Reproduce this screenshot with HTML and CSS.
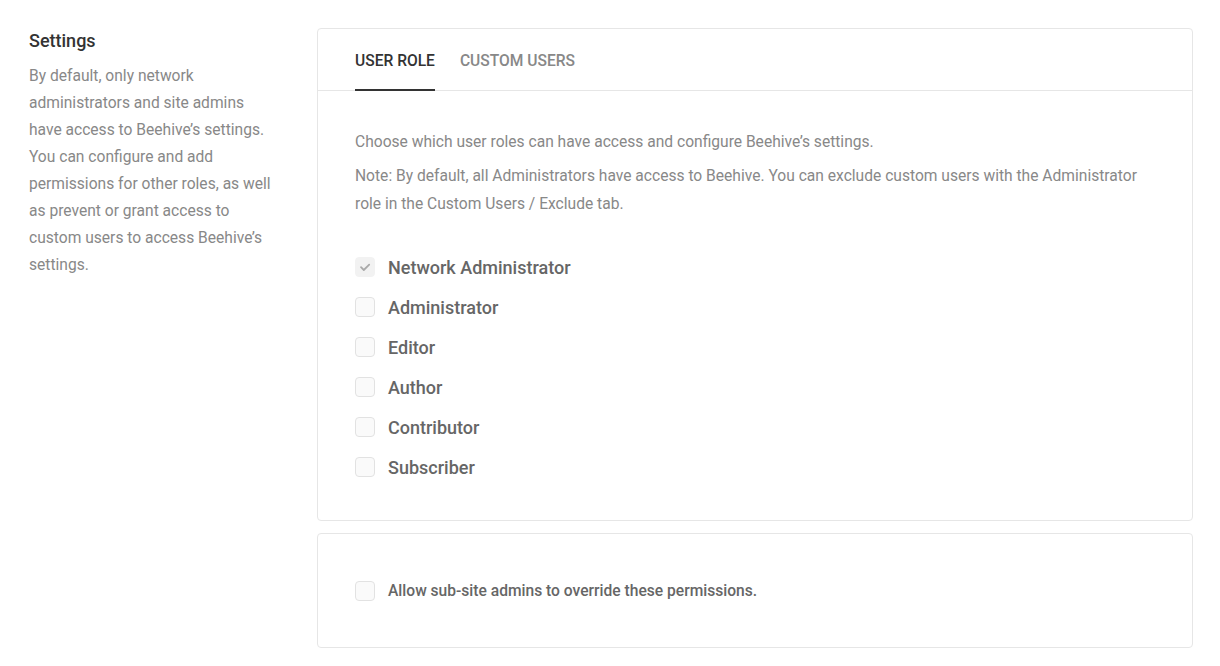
FILE: index.html
```html
<!DOCTYPE html>
<html>
<head>
<meta charset="utf-8">
<link rel="stylesheet" href="styles.css">
</head>
<body>
<div class="page">
  <aside class="side">
    <h2 class="side-title">Settings</h2>
    <p class="side-desc">By default, only network administrators and site admins have access to Beehive’s settings. You can configure and add permissions for other roles, as well as prevent or grant access to custom users to access Beehive’s settings.</p>
  </aside>
  <main class="main">
    <section class="card">
      <nav class="tabs">
        <span class="tab active">User Role</span>
        <span class="tab">Custom Users</span>
      </nav>
      <div class="card-body">
        <p class="text">Choose which user roles can have access and configure Beehive’s settings.</p>
        <p class="text">Note: By default, all Administrators have access to Beehive. You can exclude custom users with the Administrator role in the Custom Users / Exclude tab.</p>
        <ul class="roles">
          <li class="role"><span class="box checked"><svg viewBox="0 0 20 20" width="20" height="20"><path d="M6 10.2l2.8 2.8L14.2 7.6" fill="none" stroke="#aaa" stroke-width="1.8" stroke-linecap="round" stroke-linejoin="round"/></svg></span><span class="role-label">Network Administrator</span></li>
          <li class="role"><span class="box"></span><span class="role-label">Administrator</span></li>
          <li class="role"><span class="box"></span><span class="role-label">Editor</span></li>
          <li class="role"><span class="box"></span><span class="role-label">Author</span></li>
          <li class="role"><span class="box"></span><span class="role-label">Contributor</span></li>
          <li class="role"><span class="box"></span><span class="role-label">Subscriber</span></li>
        </ul>
      </div>
    </section>
    <section class="card card-small">
      <div class="role"><span class="box"></span><span class="small-label">Allow sub-site admins to override these permissions.</span></div>
    </section>
  </main>
</div>
</body>
</html>
```

FILE: styles.css
```css
* { box-sizing: border-box; }
html, body { margin: 0; padding: 0; background: #fff; }
body {
  font-family: Roboto, "Liberation Sans", sans-serif;
  -webkit-font-smoothing: antialiased;
}
.page {
  display: grid;
  grid-template-columns: 250px 1fr;
  column-gap: 38px;
  padding: 28px 27px 0 29px;
}
.side-title {
  margin: 0;
  font-size: 18px;
  font-weight: 500;
  line-height: 26px;
  color: #333;
}
.side-desc {
  margin: 9px 0 0;
  font-size: 15.6px;
  line-height: 27px;
  color: #888;
}
.main {
  display: flex;
  flex-direction: column;
  gap: 12px;
}
.card {
  border: 1px solid #e6e6e6;
  border-radius: 4px;
  background: #fff;
}
.tabs {
  display: flex;
  gap: 25px;
  padding: 0 37px;
  border-bottom: 1px solid #e6e6e6;
  height: 62px;
}
.tab {
  font-size: 15.6px;
  font-weight: 500;
  text-transform: uppercase;
  color: #888;
  line-height: 20px;
  padding-top: 22px;
  margin-bottom: -1px;
  border-bottom: 2px solid transparent;
}
.tab.active {
  color: #333;
  border-bottom-color: #333;
}
.card-body {
  padding: 37px 37px 33px;
}
.text {
  margin: 0 0 6px;
  font-size: 15.6px;
  line-height: 28px;
  color: #888;
}
.roles {
  list-style: none;
  margin: 29px 0 0;
  padding: 0;
}
.role {
  display: flex;
  align-items: center;
  height: 40px;
}
.box {
  width: 20px;
  height: 20px;
  border: 1px solid #e2e2e2;
  border-radius: 4px;
  background: #fafafa;
  margin-right: 13px;
  flex: none;
  display: flex;
  align-items: center;
  justify-content: center;
}
.box svg { display: block; margin: -1px; }
.box.checked {
  background: #f2f2f2;
  border-color: #f2f2f2;
}
.role-label {
  font-size: 18px;
  font-weight: 500;
  color: #666;
}
.card-small {
  padding: 37px 37px 36px;
}
.small-label {
  font-size: 15.6px;
  font-weight: 500;
  color: #666;
}
```
